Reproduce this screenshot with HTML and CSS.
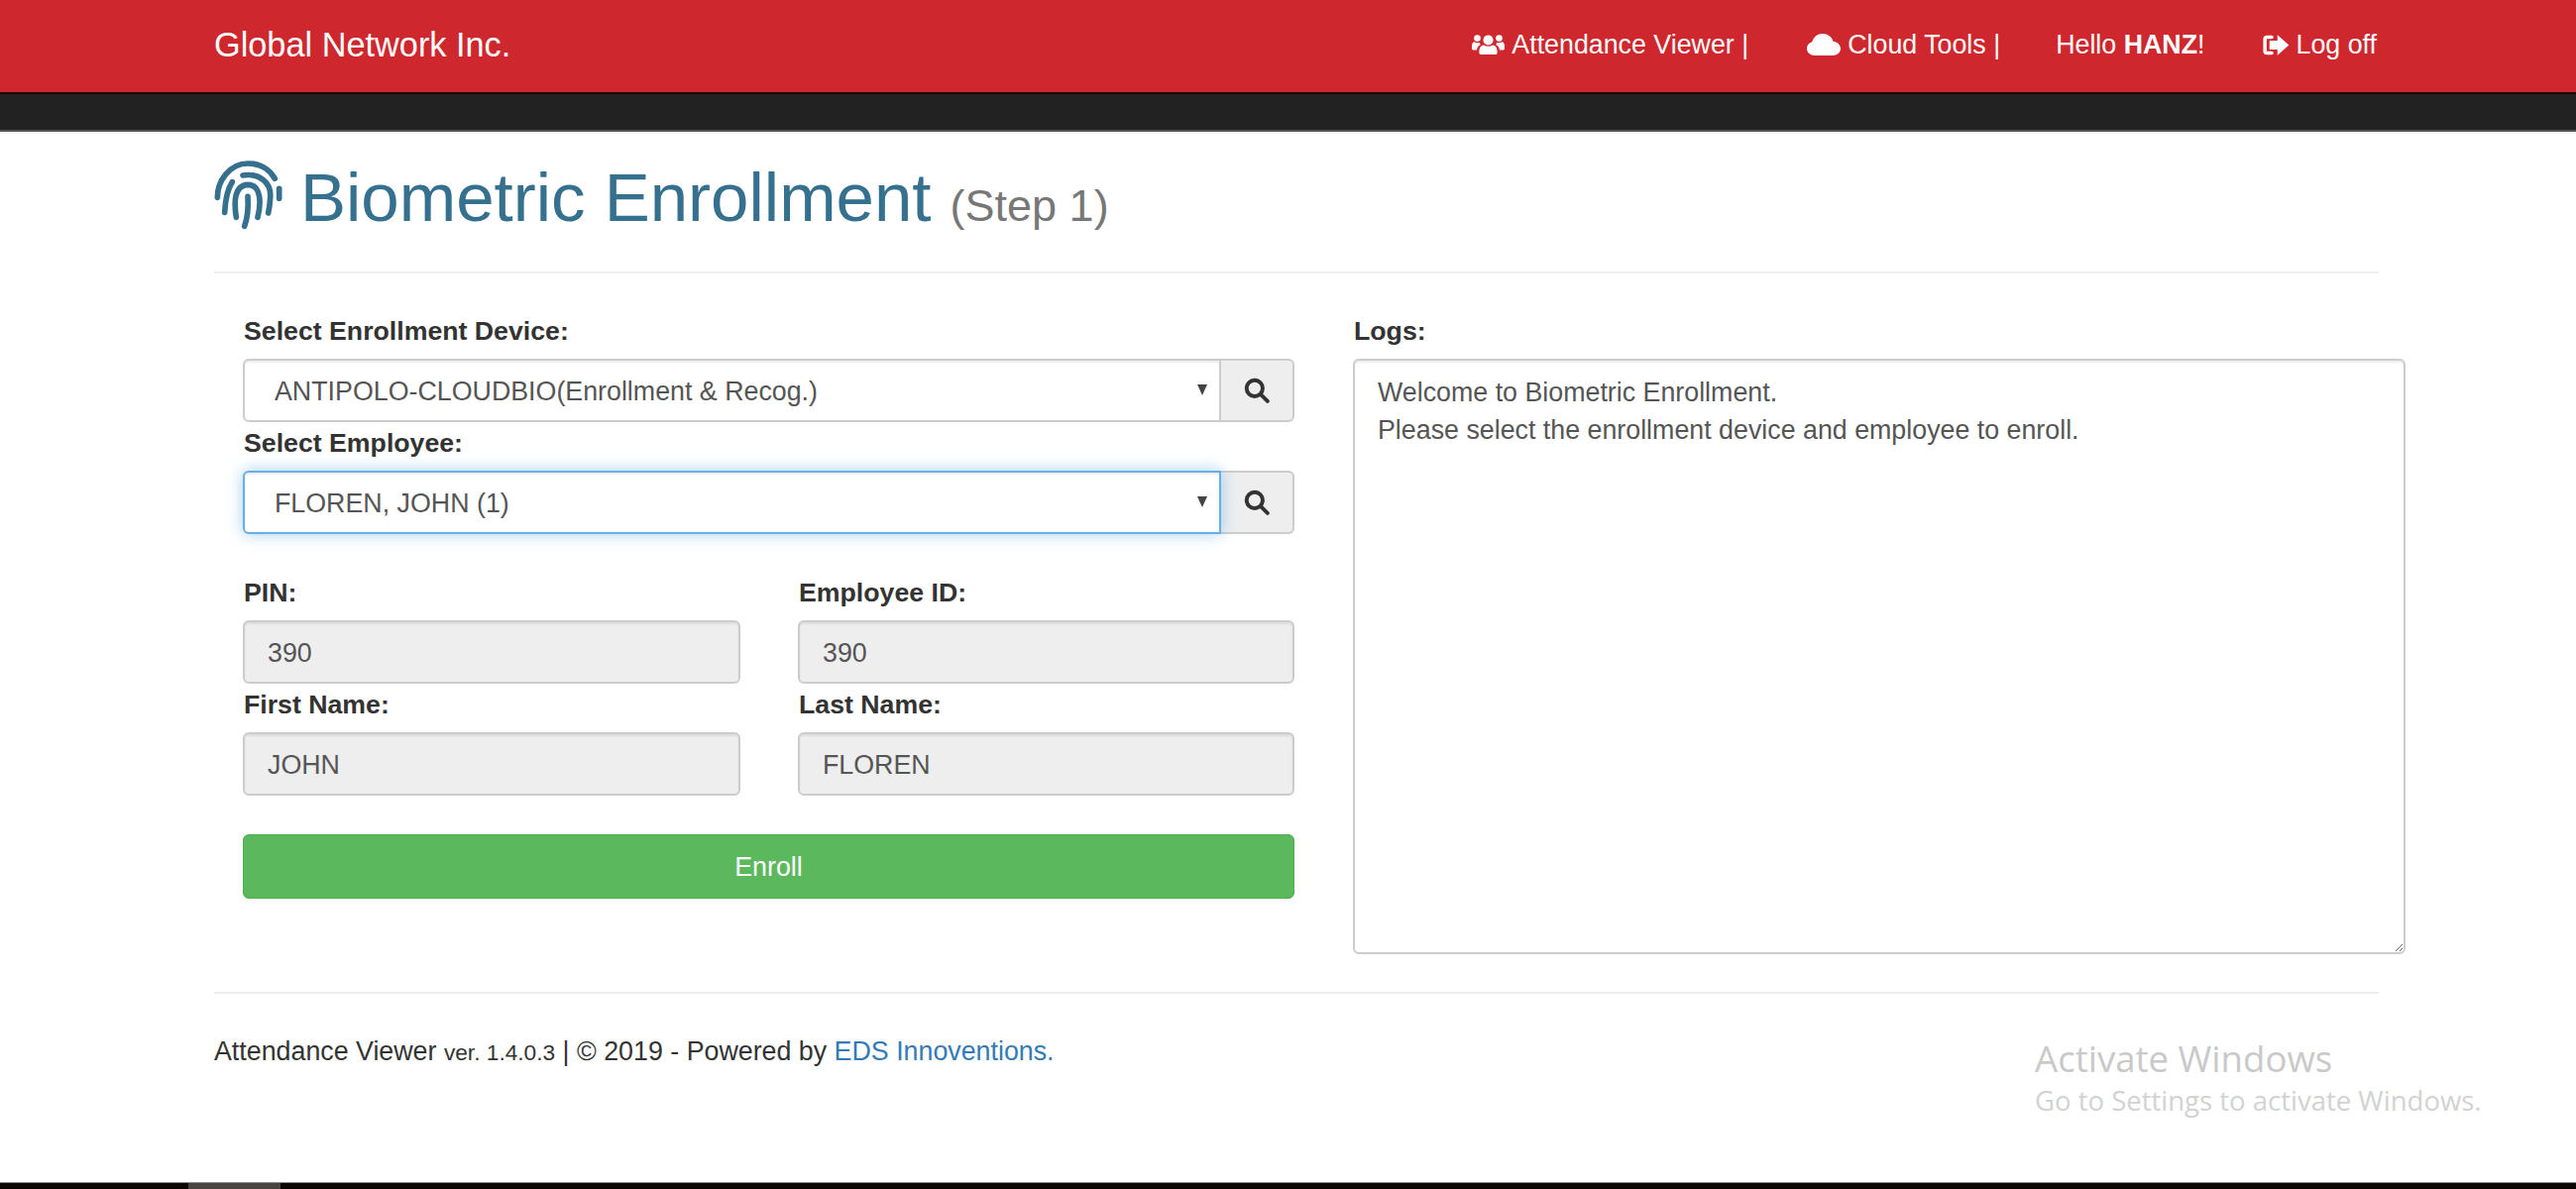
FILE: index.html
```html
<!doctype html>
<html lang="en">
<head>
	<meta charset="UTF-8">
	<title>Biometric Enrollment</title>
	<link rel="stylesheet" href="styles.css">
</head>
<body>
	<div class="topbar">
		<a class="brand" href="#">Global Network Inc.</a>
		<ul class="topnav">
			<li class="nav-first">
				<svg class="nav-icon users" viewBox="0 0 36 24"><circle cx="18" cy="7" r="5.500"/><circle cx="6" cy="5" r="3.600"/><circle cx="30" cy="5" r="3.600"/><path d="M10 23c-1 0-2-1-2-2.500 0-5 2-7.500 5-8 1.500 1 3.200 1.500 5 1.500s3.500-.5 5-1.500c3 .5 5 3 5 8 0 1.500-1 2.500-2 2.500z"/><path d="M0 14c0-3 1-5 3-5 1 .8 2 1.200 3 1.200s1.600-.2 2.200-.6c.2 1 .7 1.700 1.500 2.400-2.700 1-4 3.200-4.200 6H2c-1.200 0-2-1-2-2z"/><path d="M36 14c0-3-1-5-3-5-1 .8-2 1.200-3 1.200s-1.600-.2-2.200-.6c-.2 1-.7 1.700-1.500 2.400 2.700 1 4 3.200 4.200 6H34c1.200 0 2-1 2-2z"/></svg>
				<span>Attendance Viewer |</span>
			</li>
			<li>
				<svg class="nav-icon cloud" viewBox="0 0 34 22"><path d="M8 22C3.500 22 0 19 0 15c0-3.200 2.200-5.800 5.300-6.700C6.500 3.500 10.800 0 16 0c5 0 9.200 3.200 10.500 7.700 4.200.3 7.500 3.500 7.500 7.300 0 4-3.500 7-8 7z"/></svg>
				<span>Cloud Tools |</span>
			</li>
			<li><span>Hello <b>HANZ</b>!</span></li>
			<li>
				<svg class="nav-icon logoff" viewBox="0 0 24 20"><path d="M9 3H4.500C3.700 3 3 3.700 3 4.500v11c0 .8.7 1.500 1.500 1.500H9" fill="none" stroke="#fff" stroke-width="3" stroke-linecap="round"/><path d="M14 1l10 9-10 9v-5H7V6h7z"/></svg>
				<span>Log off</span>
			</li>
		</ul>
	</div>
	<div class="subbar"></div>

	<div class="content">
		<h1 class="page-title">
			<svg class="finger" viewBox="0 0 360 300" fill="none" stroke="#35708e" stroke-width="17" stroke-linecap="round">
				<path d="M58 175C58 125 95 72 150 72 190 72 218 92 232 118"/>
				<path d="M135 108C185 100 222 130 218 175 217 195 215 208 212 222"/>
				<path d="M103 128C88 150 82 185 80 220"/>
				<path d="M115 235C108 190 108 138 150 136 192 136 190 195 180 235"/>
				<path d="M150 172C152 205 150 235 140 262"/>
				<path d="M245 148V178"/>
			</svg>
			<span>Biometric Enrollment</span> <small>(Step 1)</small>
		</h1>
		<hr class="rule title-rule">

		<div class="form-row">
			<div class="left-col">
				<label class="lbl">Select Enrollment Device:</label>
				<div class="input-group">
					<div class="select-wrap">
						<select class="field">
							<option>ANTIPOLO-CLOUDBIO(Enrollment &amp; Recog.)</option>
						</select>
					</div>
					<span class="addon"><svg viewBox="0 0 24 24" fill="none" stroke="#333" stroke-width="3.600" stroke-linecap="round"><circle cx="10" cy="10" r="7.500"/><path d="M16 16l6 6"/></svg></span>
				</div>
				<label class="lbl">Select Employee:</label>
				<div class="input-group">
					<div class="select-wrap">
						<select class="field focused">
							<option>FLOREN, JOHN (1)</option>
						</select>
					</div>
					<span class="addon"><svg viewBox="0 0 24 24" fill="none" stroke="#333" stroke-width="3.600" stroke-linecap="round"><circle cx="10" cy="10" r="7.500"/><path d="M16 16l6 6"/></svg></span>
				</div>

				<div class="two-col">
					<div>
						<label class="lbl">PIN:</label>
						<input class="field" type="text" value="390" disabled>
					</div>
					<div>
						<label class="lbl">Employee ID:</label>
						<input class="field" type="text" value="390" disabled>
					</div>
					<div>
						<label class="lbl">First Name:</label>
						<input class="field" type="text" value="JOHN" disabled>
					</div>
					<div>
						<label class="lbl">Last Name:</label>
						<input class="field" type="text" value="FLOREN" disabled>
					</div>
				</div>

				<button class="btn-enroll" type="button">Enroll</button>
			</div>
			<div class="right-col">
				<label class="lbl">Logs:</label>
				<textarea class="logs">Welcome to Biometric Enrollment.
Please select the enrollment device and employee to enroll.</textarea>
			</div>
		</div>

		<hr class="rule footer-rule">
		<p class="footer-text">Attendance Viewer <small>ver. 1.4.0.3</small> | © 2019 - Powered by <a href="#">EDS Innoventions.</a></p>
	</div>

	<div class="watermark">
		<div class="wm-title">Activate Windows</div>
		<div class="wm-sub">Go to Settings to activate Windows.</div>
	</div>

	<div class="taskbar"><span class="task-thumb"></span></div>
</body>
</html>
```

FILE: styles.css
```css
*{
	box-sizing: border-box;
}
html,body{
	height: 100%;
}
body{
	margin: 0;
	display: flex;
	flex-direction: column;
	height: 1200px;
	overflow: hidden;
	position: relative;
	background: #fff;
	color: #333;
	font-family: "Liberation Sans", Arial, sans-serif;
	font-size: 26.800px;
}
a{
	text-decoration: none;
}

.topbar{
	height: 95px;
	flex: none;
	display: flex;
	align-items: center;
	justify-content: space-between;
	padding: 0 201px 3px 216px;
	background: #ce272e;
	border-bottom: 2px solid #1c0606;
	color: #fff;
}
.brand{
	color: #fff;
	font-size: 34.300px;
}
.topnav{
	display: flex;
	margin: 0;
	padding: 0;
	list-style: none;
	font-size: 26.800px;
}
.topnav li{
	display: flex;
	align-items: center;
	gap: 7px;
	margin-left: 56px;
	white-space: nowrap;
}
.topnav .nav-first{
	margin-right: 3px;
}
.nav-icon{
	fill: #fff;
	flex: none;
}
.users{
	width: 33px;
	height: 22px;
}
.cloud{
	width: 34px;
	height: 22px;
}
.logoff{
	width: 29px;
	height: 23px;
}

.subbar{
	height: 38px;
	flex: none;
	background: #222;
	border-bottom: 2px solid #555;
}

.content{
	flex: 1;
	padding: 0 199px 0 216px;
}
.page-title{
	display: flex;
	align-items: baseline;
	margin: 0;
	height: 141px;
	padding-top: 22px;
	font-weight: normal;
	font-size: 69px;
	line-height: 90px;
	color: #35708e;
}
.finger{
	width: 120px;
	height: 100px;
	flex: none;
	align-self: flex-start;
	margin: -14px -17px 0 -16px;
}
.page-title small{
	margin-left: 19px;
	font-size: 45px;
	color: #777;
}
.rule{
	margin: 0;
	border: 0;
	border-top: 2px solid #eee;
}

.form-row{
	display: grid;
	grid-template-columns: 1061px 1062px;
	column-gap: 59px;
	margin: 0 -27px 0 29px;
	padding-top: 37px;
}
.lbl{
	display: block;
	height: 49px;
	padding-left: 1px;
	font-weight: bold;
	font-size: 26.700px;
	line-height: 42px;
	white-space: nowrap;
}
.input-group{
	display: flex;
	height: 64px;
}
.select-wrap{
	flex: 1;
	position: relative;
}
.select-wrap::after{
	content: "";
	position: absolute;
	right: 14px;
	top: 26px;
	border-left: 5px solid transparent;
	border-right: 5px solid transparent;
	border-top: 11px solid #444;
}
.field{
	display: block;
	width: 100%;
	height: 64px;
	padding: 2px 23px 0;
	border: 2px solid #ccc;
	border-radius: 6px;
	background: #fff;
	color: #555;
	font-family: inherit;
	font-size: 26.800px;
	box-shadow: inset 0 2px 2px rgba(0,0,0,.075);
	outline: none;
}
select.field{
	appearance: none;
	padding-left: 30px;
	border-radius: 6px 0 0 6px;
}
.field.focused{
	position: relative;
	border-color: #66afe9;
	box-shadow: inset 0 2px 2px rgba(0,0,0,.075), 0 0 16px rgba(102,175,233,.6);
}
.field:disabled{
	background: #eee;
	opacity: 1;
}
.addon{
	width: 74px;
	display: flex;
	align-items: center;
	justify-content: center;
	background: #eee;
	border: 2px solid #ccc;
	border-left: 0;
	border-radius: 0 6px 6px 0;
}
.addon svg{
	width: 26px;
	height: 26px;
}

.two-col{
	display: grid;
	grid-template-columns: 502px 501px;
	column-gap: 58px;
	padding-top: 38px;
}
.btn-enroll{
	display: block;
	width: 100%;
	height: 65px;
	margin-top: 39px;
	padding-top: 3px;
	border: 1px solid #4cae4c;
	border-radius: 6px;
	background: #5cb85c;
	color: #fff;
	font-family: inherit;
	font-size: 26.800px;
}
.logs{
	display: block;
	width: 100%;
	height: 601px;
	padding: 13px 23px;
	border: 2px solid #ccc;
	border-radius: 6px;
	color: #555;
	font-family: inherit;
	font-size: 26.800px;
	line-height: 38px;
	box-shadow: inset 0 2px 2px rgba(0,0,0,.075);
	outline: none;
}

.footer-rule{
	margin-top: 38px;
}
.footer-text{
	margin: 40px 0 0;
	font-size: 26.800px;
	line-height: 36px;
	white-space: nowrap;
}
.footer-text small{
	font-size: 22.700px;
}
.footer-text a{
	color: #337ab7;
}

.watermark{
	position: absolute;
	left: 2053px;
	top: 1044px;
	font-family: "Open Sans", "Noto Sans", sans-serif;
	white-space: nowrap;
}
.wm-title{
	font-size: 36.600px;
	line-height: 48px;
	color: #c9c9c9;
}
.wm-sub{
	font-size: 27.500px;
	line-height: 36px;
	color: #d2d2d2;
	margin-top: 1px;
}

.taskbar{
	height: 7px;
	flex: none;
	background: #0b0503;
	border-top: 1px solid #888;
}
.task-thumb{
	display: block;
	width: 93px;
	height: 6px;
	margin-left: 190px;
	background: #4a4440;
}
```
